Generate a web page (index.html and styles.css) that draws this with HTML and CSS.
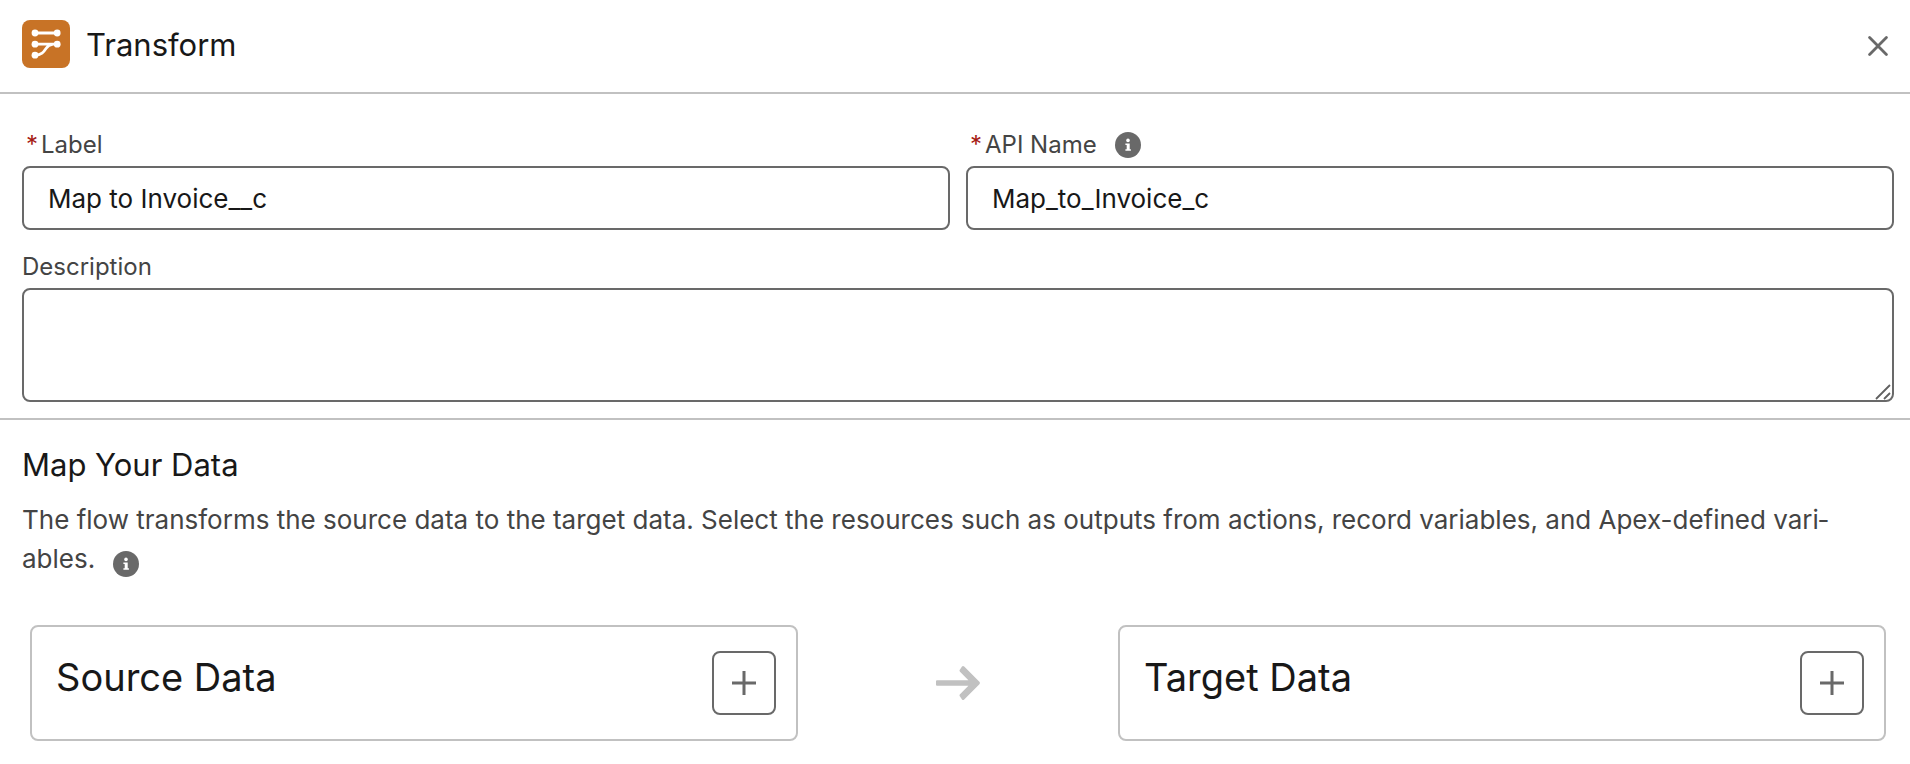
FILE: index.html
```html
<!DOCTYPE html>
<html lang="en">
<head>
<meta charset="utf-8">
<title>Transform</title>
<link rel="stylesheet" href="styles.css">
</head>
<body>
<svg class="sprite" aria-hidden="true">
  <symbol id="info" viewBox="0 0 26 26">
    <circle cx="13" cy="13" r="13" fill="#696969"/>
    <circle cx="13" cy="8.4" r="1.8" fill="#fff"/>
    <path d="M10.4 11.4h4.3v5.8h1.2v1.6h-5.5v-1.6h1.3v-4.2h-1.3z" fill="#fff"/>
  </symbol>
  <symbol id="plus" viewBox="0 0 24 24">
    <path d="M12 0v24M0 12h24" stroke="#696969" stroke-width="3"/>
  </symbol>
</svg>
<header class="header">
  <svg class="header-icon" viewBox="0 0 48 48" aria-hidden="true">
    <rect width="48" height="48" rx="8" fill="#c87326"/>
    <g fill="none" stroke="#fff" stroke-width="2.8">
      <path d="M13 13h22M13 24.2h22M13 35.2C20 35.2 22 31.500 24 28.500S28 24.800 31 24.200"/>
    </g>
    <g fill="#fff">
      <circle cx="13" cy="13" r="3.4"/><circle cx="35.2" cy="13" r="3.4"/>
      <circle cx="13" cy="24.2" r="3.4"/><circle cx="35.2" cy="24.2" r="3.4"/>
      <circle cx="13" cy="35.2" r="3.4"/>
    </g>
  </svg>
  <h1 class="title">Transform</h1>
  <button class="close" type="button" aria-label="Close">
    <svg class="close-icon" viewBox="0 0 20 20" aria-hidden="true"><path d="M1.6 1.6l16.8 16.8M18.4 1.6L1.6 18.4" stroke="#696969" stroke-width="2.8" stroke-linecap="round"/></svg>
  </button>
</header>
<main>
  <form class="details">
    <div class="field">
      <div class="label-row required"><span class="star">*</span><label for="label">Label</label></div>
      <input class="control" id="label" type="text" value="Map to Invoice__c" required>
    </div>
    <div class="field">
      <div class="label-row required"><span class="star">*</span><label for="api">API Name</label>
        <button class="info" type="button" aria-label="Help for API Name"><svg class="info-icon"><use href="#info"/></svg></button>
      </div>
      <input class="control" id="api" type="text" value="Map_to_Invoice_c" required>
    </div>
    <div class="field wide">
      <div class="label-row"><label for="description">Description</label></div>
      <div class="area">
        <textarea class="control text-area" id="description"></textarea>
        <svg class="grip" viewBox="0 0 16 16" aria-hidden="true"><path d="M1 15L15 1M9 15l6-6" stroke="#606060" stroke-width="1.8"/></svg>
      </div>
    </div>
  </form>
  <section class="mapping">
    <h2 class="title">Map Your Data</h2>
    <p class="intro">The flow transforms the source data to the target data. Select the resources such as outputs from actions, record variables, and Apex-defined vari&shy;ables.<button class="info inline" type="button" aria-label="Help for mapping"><svg class="info-icon"><use href="#info"/></svg></button></p>
    <div class="cards">
      <article class="card">
        <h3 class="card-title">Source Data</h3>
        <button class="add" type="button" aria-label="Add source data"><svg class="plus"><use href="#plus"/></svg></button>
      </article>
      <svg class="arrow" viewBox="0 0 44 36" aria-hidden="true"><path d="M1 15.2H32.400L24 6.800Q23 5.600 24 4.400L26 1.600Q27 .4 28.200 1.600L43.400 16.800Q44.400 18 43.400 19.200L28.200 34.400Q27 35.600 26 34.400L24 31.600Q23 30.400 24 29.200L32.400 20.800H1Q0 20.800 0 19.800V16.200Q0 15.200 1 15.200Z" fill="#c1c1c1"/></svg>
      <article class="card">
        <h3 class="card-title">Target Data</h3>
        <button class="add" type="button" aria-label="Add target data"><svg class="plus"><use href="#plus"/></svg></button>
      </article>
    </div>
  </section>
</main>
</body>
</html>
```
FILE: styles.css
```css
* { box-sizing: border-box; }
body {
  margin: 0;
  background: #fff;
  color: #181818;
  font-family: Inter, "Liberation Sans", sans-serif;
}
h1, h2, h3, p { margin: 0; font-weight: 400; }
button { padding: 0; border: 0; background: none; cursor: pointer; }
svg { display: block; }
.sprite { position: absolute; width: 0; height: 0; }

.header {
  display: flex;
  align-items: center;
  padding: 20px 22px 20px;
  border-bottom: 2px solid #c1c1c1;
}
.header-icon { width: 48px; height: 48px; margin: 0 16px 4px 0; }
.title { font-size: 31px; line-height: 40px; }
.header .title { padding-bottom: 2px; }
.close { margin-left: auto; }
.close-icon { width: 20px; height: 20px; }

.details {
  display: grid;
  grid-template-columns: 1fr 1fr;
  gap: 18px 16px;
  padding: 32px 16px 16px 22px;
  border-bottom: 2px solid #c1c1c1;
}
.wide { grid-column: 1 / -1; }
.label-row {
  display: flex;
  align-items: center;
  height: 40px;
  padding-bottom: 3px;
  color: #444;
  font-size: 24px;
  line-height: 37px;
}
.required { padding-left: 4px; }
.star { margin-right: 3px; color: #a61a14; }
.info { display: inline-block; margin-left: 18px; }
.info.inline { vertical-align: -9px; }
.info-icon { width: 26px; height: 26px; }
.control {
  display: block;
  width: 100%;
  height: 64px;
  padding: 0 24px;
  border: 2px solid #696969;
  border-radius: 8px;
  background: #fff;
  color: #181818;
  font: 26px/36px Inter, "Liberation Sans", sans-serif;
}
.area { position: relative; }
.text-area { height: 114px; padding: 12px 24px; resize: none; }
.grip { position: absolute; right: 3px; bottom: 2px; width: 16px; height: 16px; }

.mapping { padding: 25px 16px 22px 22px; }
.intro {
  margin-top: 15px;
  padding-right: 56px;
  color: #444;
  font-size: 26px;
  line-height: 39px;
}
.cards {
  display: grid;
  grid-template-columns: 12fr 5fr 12fr;
  align-items: center;
  justify-items: center;
  padding: 47px 8px 0;
}
.card {
  display: flex;
  justify-content: space-between;
  width: 100%;
  padding: 24px 20px 24px 24px;
  border: 2px solid #c1c1c1;
  border-radius: 8px;
}
.card-title { font-size: 38px; line-height: 52px; }
.add {
  display: grid;
  place-items: center;
  width: 64px;
  height: 64px;
  border: 2px solid #696969;
  border-radius: 8px;
}
.plus { width: 24px; height: 24px; }
.arrow { width: 44px; height: 36px; }
```
